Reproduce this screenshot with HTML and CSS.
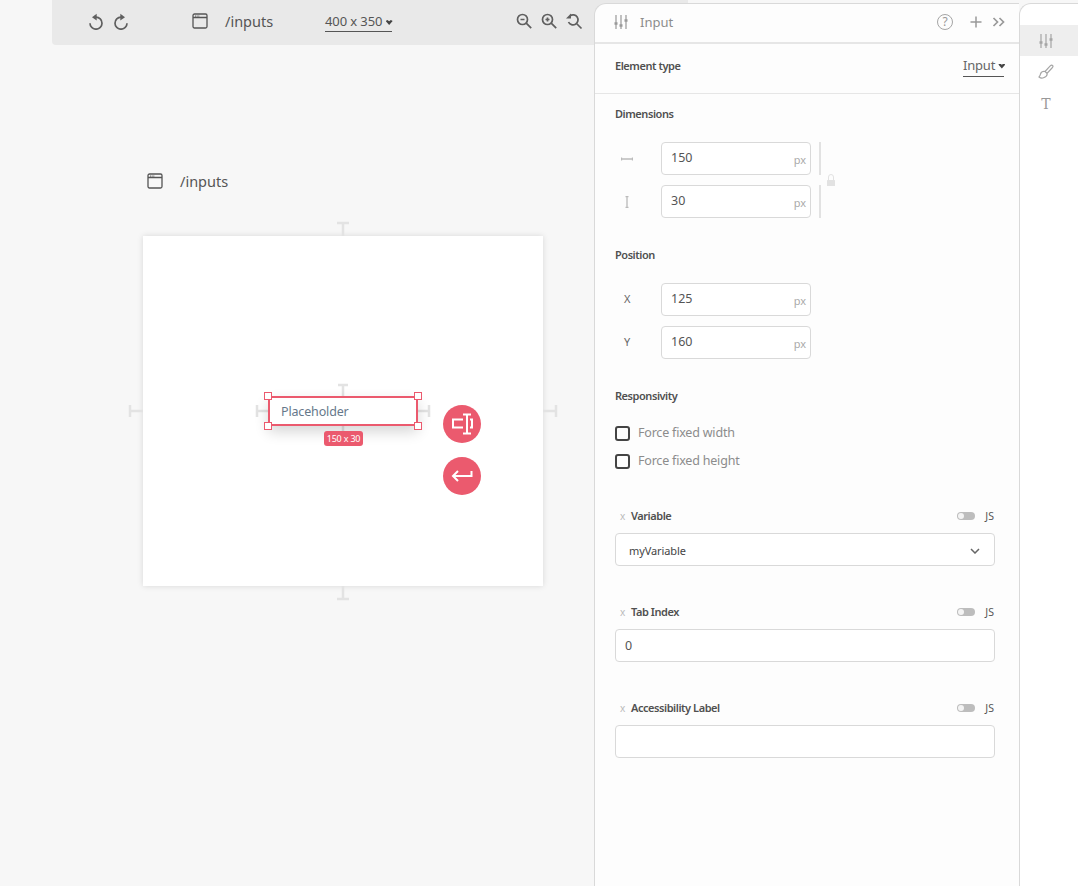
FILE: index.html
```html
<!DOCTYPE html>
<html lang="en">
<head>
  <meta charset="UTF-8" />
  <title>Inputs editor</title>
  <link rel="stylesheet" href="styles.css">
</head>
<body>
  <div class="app">
    <main class="stage">
      <div class="toolbar">
        <div class="history">
          <svg class="icon" viewBox="0 0 18 18"><path d="M9 5.200a6 6 0 1 1-6 6"/><path class="solid" d="M9.700 1.800v6.800L5 5.200z"/></svg>
          <svg class="icon" viewBox="0 0 18 18"><path d="M9 5.200a6 6 0 1 0 6 6"/><path class="solid" d="M8.300 1.800v6.800L13 5.200z"/></svg>
        </div>
        <svg class="win-icon" viewBox="0 0 16 16"><rect x="1" y="1" width="14" height="14" rx="1.500"/><path d="M1 4.500h14M3 3h.6M4.800 3h.6M6.600 3h.6"/></svg>
        <span class="route">/inputs</span>
        <span class="size-pick">400 x 350 <i class="caret"></i></span>
        <div class="zoom-tools">
          <svg class="icon" viewBox="0 0 18 18"><circle cx="7.500" cy="7.500" r="5"/><path d="M11.200 11.200l5 5M5.500 7.500h4"/></svg>
          <svg class="icon" viewBox="0 0 18 18"><circle cx="7.500" cy="7.500" r="5"/><path d="M11.200 11.200l5 5M5.500 7.500h4M7.500 5.500v4"/></svg>
          <svg class="icon" viewBox="0 0 18 18"><path d="M5 3.800A5 5 0 1 1 3.500 10M11.500 11.500l5 5"/><path class="solid" d="M6 1.500v5H1z"/></svg>
        </div>
      </div>

      <div class="page-title">
        <svg class="win-icon" viewBox="0 0 16 16"><rect x="1" y="1" width="14" height="14" rx="1.500"/><path d="M1 4.500h14M3 3h.6M4.800 3h.6M6.600 3h.6"/></svg>
        <span class="route">/inputs</span>
      </div>

      <div class="frame">
        <svg class="guides" viewBox="0 0 440 390">
          <path d="M220 20V7M214 7h12M220 370v13M214 383h12"/>
          <path d="M6 195h14M7 189v12M420 195h14M433 189v12"/>
          <path d="M220 180v-11M215 169h10M220 210v10M133 195h12M134 189v12M295 195h12M306 189v12"/>
        </svg>
        <div class="selected">
          <span class="selected-text">Placeholder</span>
          <i class="handle tl"></i><i class="handle tr"></i><i class="handle bl"></i><i class="handle br"></i>
          <span class="size-badge">150 x 30</span>
        </div>
        <button class="fab fab-resize">
          <svg viewBox="0 0 22 22"><path d="M12 6.500H2v8h10M19 6.500h2v8h-2M12 1.500h8M16 1.500v19M12 20.500h8"/></svg>
        </button>
        <button class="fab fab-enter">
          <svg viewBox="0 0 22 22"><path d="M20.500 6v5H2M7 6l-5 5 5 5"/></svg>
        </button>
      </div>
    </main>

    <aside class="panel">
      <div class="panel-head">
        <svg class="icon sliders" viewBox="0 0 16 16"><path d="M3 1v14M8 1v14M13 1v14"/><path class="knob" d="M1.500 9.500h3M6.500 11.500h3M11.500 6.500h3"/></svg>
        <span class="panel-title">Input</span>
        <span class="head-tools">
          <span class="help">?</span>
          <svg class="icon plus" viewBox="0 0 14 14"><path d="M7 1.500v11M1.500 7h11"/></svg>
          <svg class="icon more" viewBox="0 0 14 14"><path d="M1.500 3L5.500 7l-4 4M7.500 3l4 4-4 4"/></svg>
        </span>
      </div>

      <div class="type-row">
        <span class="label">Element type</span>
        <span class="type-pick">Input <i class="caret"></i></span>
      </div>

      <section class="block">
        <div class="label">Dimensions</div>
        <div class="field-row">
          <svg class="axis-icon" viewBox="0 0 12 12"><path d="M.5 6h11M.5 4.500v3M11.500 4.500v3"/></svg>
          <div class="num-field"><span>150</span><small>px</small></div>
          <i class="lock-bar"></i>
        </div>
        <div class="field-row">
          <svg class="axis-icon" viewBox="0 0 12 12"><path d="M6 .5v11M4.500 .5h3M4.500 11.500h3"/></svg>
          <div class="num-field"><span>30</span><small>px</small></div>
          <i class="lock-bar"></i>
        </div>
        <svg class="lock" viewBox="0 0 8 12"><path class="shackle" d="M1.500 6V3a2.500 2.500 0 0 1 5 0v3"/><rect y="6" width="8" height="6" rx=".5"/></svg>
      </section>

      <section class="block">
        <div class="label">Position</div>
        <div class="field-row">
          <span class="axis-name">X</span>
          <div class="num-field"><span>125</span><small>px</small></div>
        </div>
        <div class="field-row">
          <span class="axis-name">Y</span>
          <div class="num-field"><span>160</span><small>px</small></div>
        </div>
      </section>

      <section class="block">
        <div class="label">Responsivity</div>
        <div class="check-list">
          <label class="check"><i class="box"></i>Force fixed width</label>
          <label class="check"><i class="box"></i>Force fixed height</label>
        </div>
      </section>

      <section class="prop prop-first">
        <div class="prop-head">
          <span class="x-mark">x</span><span class="label">Variable</span>
          <span class="js-toggle"><i class="switch"></i>JS</span>
        </div>
        <div class="wide-input select-like">myVariable
          <svg viewBox="0 0 10 6"><path d="M1 1l4 4 4-4"/></svg>
        </div>
      </section>

      <section class="prop">
        <div class="prop-head">
          <span class="x-mark">x</span><span class="label">Tab Index</span>
          <span class="js-toggle"><i class="switch"></i>JS</span>
        </div>
        <div class="wide-input">0</div>
      </section>

      <section class="prop">
        <div class="prop-head">
          <span class="x-mark">x</span><span class="label">Accessibility Label</span>
          <span class="js-toggle"><i class="switch"></i>JS</span>
        </div>
        <div class="wide-input"></div>
      </section>
    </aside>

    <nav class="rail">
      <div class="rail-item active">
        <svg class="icon sliders" viewBox="0 0 16 16"><path d="M3 1v14M8 1v14M13 1v14"/><path class="knob" d="M1.500 9.500h3M6.500 11.500h3M11.500 6.500h3"/></svg>
      </div>
      <div class="rail-item">
        <svg class="icon" viewBox="0 0 16 16"><path d="M14.500 1.500c-.8-.8-1.500-.3-2.500.7L7 7.500l2 2 5-5.500c1-1 1.300-1.800.5-2.500zM7 7.500c-2-.5-4 .5-4.500 2.500-.2 1.200-.8 2-1.500 3 1 .8 2.800 1.500 4.500.8 2.500-1 4-2.500 3.500-4.300"/></svg>
      </div>
      <div class="rail-item rail-text">T</div>
    </nav>
  </div>
</body>
</html>
```

FILE: styles.css
```css
:root {
  --pink: #eb5a6e;
  --line: #d9d9d9;
  --dark: #555;
  --soft: #8c8c8c;
}

* {
  box-sizing: border-box;
  font-family: "Noto Sans", sans-serif;
}

html, body {
  height: 100%;
}

body {
  margin: 0;
  background: #f7f7f7;
  overflow: hidden;
}

.app {
  display: flex;
  height: 886px;
  width: 1078px;
}

.icon {
  width: 18px;
  height: 18px;
  fill: none;
  stroke: #5f5f5f;
  stroke-width: 1.700;
}

.icon .solid {
  fill: #5f5f5f;
  stroke: none;
}

.win-icon {
  width: 16px;
  height: 16px;
  fill: none;
  stroke: var(--dark);
  stroke-width: 1.300;
}

.caret {
  display: inline-block;
  width: 7px;
  height: 5px;
  vertical-align: 1px;
  background: #444;
  clip-path: polygon(0 20%, 25% 0, 50% 25%, 75% 0, 100% 20%, 50% 100%);
}

/* stage */
.stage {
  width: 594px;
  flex: none;
}

.toolbar {
  display: flex;
  align-items: center;
  width: 636px;
  height: 45px;
  margin-left: 52px;
  padding: 0 0 4px 35px;
  background: #e9e9e9;
  border-bottom-left-radius: 4px;
}

.history {
  display: flex;
  gap: 7px;
  width: 105px;
}

.route {
  font-size: 14.500px;
  color: var(--dark);
}

.toolbar .route {
  margin-left: 17px;
  width: 100px;
}

.size-pick {
  width: 67px;
  height: 19px;
  margin-top: 4px;
  font-size: 13px;
  letter-spacing: -0.1px;
  line-height: 16px;
  color: var(--dark);
  border-bottom: 1px solid var(--dark);
  white-space: nowrap;
}

.zoom-tools {
  display: flex;
  gap: 7px;
  margin-left: 123px;
}

.page-title {
  display: flex;
  align-items: center;
  gap: 17px;
  margin: 126px 0 0 147px;
  height: 20px;
}

.frame {
  position: relative;
  width: 400px;
  height: 350px;
  margin: 45px 0 0 143px;
  background: #fff;
  box-shadow: 0 0 6px rgba(0,0,0,0.13);
}

.guides {
  position: absolute;
  left: -20px;
  top: -20px;
  width: 440px;
  height: 390px;
  fill: none;
  stroke: #e3e3e3;
  stroke-width: 2.500;
}

.selected {
  position: absolute;
  left: 125px;
  top: 160px;
  width: 150px;
  height: 30px;
  padding-left: 11px;
  background: #fff;
  border: 2px solid var(--pink);
  box-shadow: 0 6px 14px rgba(0,0,0,0.16);
}

.selected-text {
  display: block;
  font-size: 12.500px;
  letter-spacing: -0.15px;
  line-height: 27px;
  color: #66788a;
}

.handle {
  position: absolute;
  width: 8px;
  height: 8px;
  background: #fff;
  border: 1px solid var(--pink);
}

.tl { left: -6px; top: -6px; }
.tr { right: -6px; top: -6px; }
.bl { left: -6px; bottom: -6px; }
.br { right: -6px; bottom: -6px; }

.size-badge {
  position: absolute;
  left: 54px;
  top: 33px;
  width: 39px;
  height: 15px;
  background: var(--pink);
  border-radius: 3px;
  color: #fff;
  font-size: 9px;
  letter-spacing: -0.2px;
  line-height: 15px;
  text-align: center;
}

.fab {
  position: absolute;
  left: 300px;
  width: 38px;
  height: 38px;
  padding: 8px;
  border: none;
  border-radius: 50%;
  background: var(--pink);
}

.fab svg {
  display: block;
  width: 22px;
  height: 22px;
  fill: none;
  stroke: #fff;
  stroke-width: 2;
}

.fab-resize { top: 169px; }
.fab-enter { top: 221px; }

/* properties panel */
.panel {
  position: relative;
  width: 425px;
  flex: none;
  margin-top: 3px;
  background: #fdfdfd;
  border-left: 1px solid var(--line);
  border-top: 1px solid var(--line);
  border-top-left-radius: 12px;
}

.panel-head {
  display: flex;
  align-items: center;
  height: 40px;
  padding: 0 13px 2px 18px;
  border-bottom: 2px solid #e6e6e6;
}

.sliders {
  width: 16px;
  height: 16px;
  stroke: #999;
  stroke-width: 1.200;
}

.sliders .knob {
  stroke-width: 2.500;
}

.panel-title {
  margin-left: 11px;
  font-size: 13px;
  color: var(--soft);
}

.head-tools {
  display: flex;
  align-items: center;
  margin-left: auto;
}

.head-tools .icon {
  width: 14px;
  height: 14px;
  stroke: #999;
  stroke-width: 1.500;
}

.head-tools .plus {
  margin: 0 9px 0 16px;
}

.head-tools .more {
  stroke-width: 1.700;
}

.help {
  width: 16px;
  height: 16px;
  border: 1.500px solid #a5a5a5;
  border-radius: 50%;
  color: #999;
  font-size: 12px;
  line-height: 13px;
  text-align: center;
}

.label {
  font-size: 11px;
  font-weight: 600;
  letter-spacing: -0.45px;
  line-height: 16px;
  color: #505050;
}

.type-row {
  display: flex;
  align-items: center;
  justify-content: space-between;
  height: 50px;
  padding: 0 15px 6px 20px;
  border-bottom: 1px solid #e6e6e6;
}

.type-pick {
  height: 20px;
  width: 41px;
  margin-top: 2px;
  font-size: 13px;
  letter-spacing: -0.2px;
  line-height: 17px;
  color: #666;
  border-bottom: 1px solid var(--dark);
  white-space: nowrap;
}

.block {
  position: relative;
  padding: 12px 0 0 20px;
}

.block + .block {
  padding-top: 29px;
}

.block > .label {
  margin-bottom: 20px;
}

.block .field-row + .field-row {
  margin-top: 10px;
}

.field-row {
  display: flex;
  align-items: center;
  height: 33px;
}

.axis-icon {
  width: 12px;
  height: 12px;
  margin: 0 28px 0 6px;
  fill: none;
  stroke: #bbb;
  stroke-width: 1.300;
}

.axis-name {
  width: 46px;
  padding: 0 0 2px 9px;
  font-size: 11px;
  color: #666;
}

.num-field {
  display: flex;
  align-items: flex-end;
  justify-content: space-between;
  width: 150px;
  height: 33px;
  padding: 0 4px 8px 9px;
  background: #fff;
  border: 1px solid var(--line);
  border-radius: 4px;
}

.num-field span {
  font-size: 12.500px;
  color: #555;
}

.num-field small {
  font-size: 11px;
  line-height: 12px;
  color: #aaa;
}

.lock-bar {
  width: 2px;
  height: 33px;
  margin-left: 8px;
  background: #e2e2e2;
}

.lock {
  position: absolute;
  left: 232px;
  top: 80px;
  width: 8px;
  height: 12px;
  fill: #e2e2e2;
}

.lock .shackle {
  fill: none;
  stroke: #e2e2e2;
}

.check-list {
  display: flex;
  flex-direction: column;
  gap: 8px;
  margin-top: -1px;
}

.check {
  display: flex;
  align-items: center;
  height: 20px;
  padding-bottom: 2px;
  font-size: 12.500px;
  letter-spacing: -0.2px;
  color: var(--soft);
}

.box {
  width: 15px;
  height: 15px;
  margin: 2px 8px 0 0;
  border: 2px solid #444;
  border-radius: 3px;
}

.prop {
  padding: 38px 24px 0 20px;
}

.prop-first {
  padding-top: 37px;
}

.prop-head {
  display: flex;
  align-items: center;
  height: 16px;
  margin-bottom: 9px;
}

.x-mark {
  width: 16px;
  padding-left: 5px;
  font-size: 10px;
  color: #bbb;
}

.js-toggle {
  display: flex;
  align-items: center;
  gap: 10px;
  margin-left: auto;
  padding-right: 1px;
  font-size: 10.500px;
  color: #555;
}

.switch {
  position: relative;
  width: 18px;
  height: 8px;
  border-radius: 4px;
  background: #bdbdbd;
}

.switch::before {
  content: "";
  position: absolute;
  left: 1px;
  top: 1px;
  width: 6px;
  height: 6px;
  border-radius: 50%;
  background: #f4f4f4;
}

.wide-input {
  display: flex;
  align-items: center;
  justify-content: space-between;
  height: 33px;
  padding: 0 14px 0 9px;
  background: #fff;
  border: 1px solid var(--line);
  border-radius: 4px;
  font-size: 12.500px;
  color: #555;
}

.select-like {
  padding: 2px 14px 0 13px;
  font-size: 11px;
  letter-spacing: -0.1px;
  color: #444;
}

.select-like svg {
  width: 10px;
  height: 6px;
  fill: none;
  stroke: #666;
  stroke-width: 1.500;
}

/* right rail */
.rail {
  flex: 1;
  margin-top: 3px;
  padding-top: 21px;
  background: #fff;
  border-left: 1px solid var(--line);
  border-top: 1px solid var(--line);
  border-top-left-radius: 12px;
}

.rail-item {
  display: flex;
  align-items: center;
  justify-content: center;
  height: 31px;
  padding-right: 6px;
}

.rail-item.active {
  background: #eee;
}

.rail-item .icon {
  width: 16px;
  height: 16px;
  stroke: #a5a5a5;
  stroke-width: 1.200;
}

.rail-text {
  padding-top: 2px;
  font-family: "DejaVu Serif", serif;
  font-size: 14px;
  color: #999;
}
```
